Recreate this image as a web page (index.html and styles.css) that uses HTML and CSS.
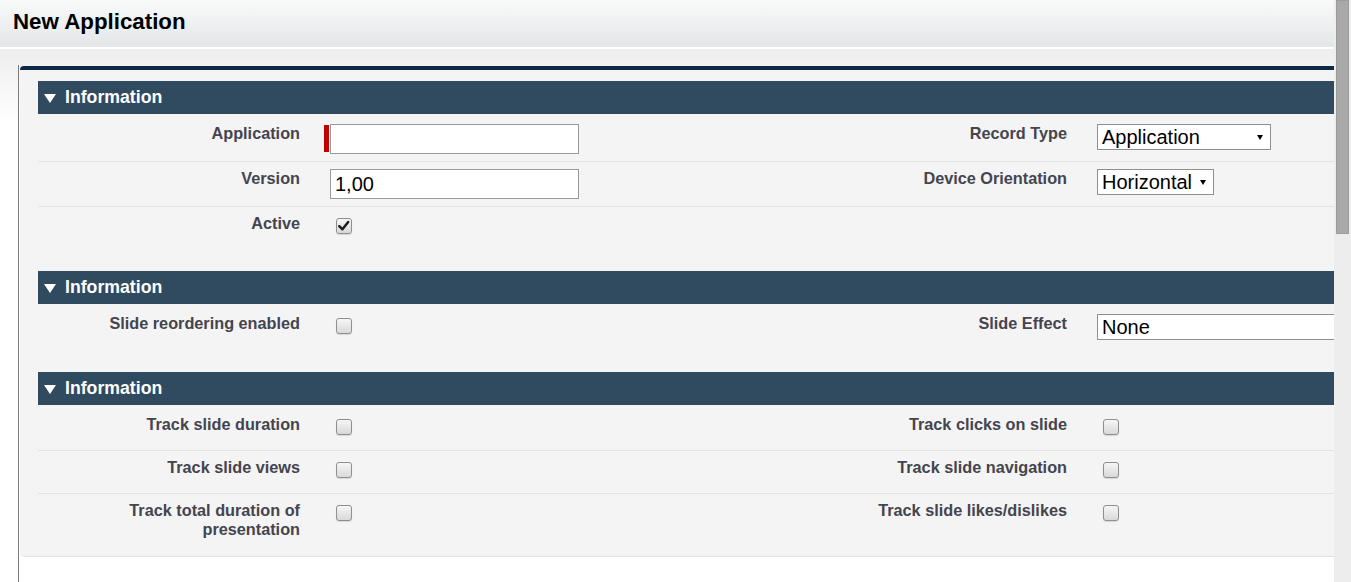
FILE: index.html
```html
<!DOCTYPE html>
<html>
<head>
<meta charset="utf-8">
<title>New Application</title>
<link rel="stylesheet" href="styles.css">
</head>
<body>
<div class="page">
  <div class="main">
    <div class="titlebar"><h1>New Application</h1></div>
    <div class="content">
      <div class="outer">
        <div class="panel">
          <div class="section">
            <div class="sec-head"><span class="tri"></span>Information</div>
            <div class="row first">
              <div class="lbl">Application</div>
              <div class="data"><span class="req"></span><input class="txt" type="text" value=""></div>
              <div class="lbl">Record Type</div>
              <div class="data rest"><span class="sel w174"><span>Application</span><span class="arrow"></span></span></div>
            </div>
            <div class="row">
              <div class="lbl">Version</div>
              <div class="data"><input class="txt" type="text" value="1,00"></div>
              <div class="lbl">Device Orientation</div>
              <div class="data rest"><span class="sel w117"><span>Horizontal</span><span class="arrow"></span></span></div>
            </div>
            <div class="row last">
              <div class="lbl">Active</div>
              <div class="data"><span class="cb checked"><svg viewBox="0 0 16 16" width="14" height="14"><path d="M2.6 8.2 L6.2 11.8 L12.8 3.4" fill="none" stroke="#1c1c1c" stroke-width="2.8" stroke-linecap="round" stroke-linejoin="round"/></svg></span></div>
              <div class="lbl"></div>
              <div class="data rest"></div>
            </div>
          </div>

          <div class="section mid">
            <div class="sec-head"><span class="tri"></span>Information</div>
            <div class="row first last">
              <div class="lbl">Slide reordering enabled</div>
              <div class="data"><span class="cb"></span></div>
              <div class="lbl">Slide Effect</div>
              <div class="data rest"><span class="sel wide"><span>None</span></span></div>
            </div>
          </div>

          <div class="section final">
            <div class="sec-head"><span class="tri"></span>Information</div>
            <div class="row first">
              <div class="lbl">Track slide duration</div>
              <div class="data"><span class="cb"></span></div>
              <div class="lbl">Track clicks on slide</div>
              <div class="data rest"><span class="cb"></span></div>
            </div>
            <div class="row">
              <div class="lbl">Track slide views</div>
              <div class="data"><span class="cb"></span></div>
              <div class="lbl">Track slide navigation</div>
              <div class="data rest"><span class="cb"></span></div>
            </div>
            <div class="row last">
              <div class="lbl">Track total duration of<br>presentation</div>
              <div class="data"><span class="cb"></span></div>
              <div class="lbl">Track slide likes/dislikes</div>
              <div class="data rest"><span class="cb"></span></div>
            </div>
          </div>
        </div>
      </div>
    </div>
  </div>
  <div class="scrollbar"><div class="thumb"></div></div>
</div>
</body>
</html>
```

FILE: styles.css
```css
html, body {
  margin: 0;
  padding: 0;
  height: 100%;
  overflow: hidden;
  background: #fff;
  font-family: "Liberation Sans", Arial, sans-serif;
}

.page {
  display: flex;
  height: 582px;
}

.main {
  flex: 1;
  min-width: 0;
  overflow: hidden;
  display: flex;
  flex-direction: column;
}

.scrollbar {
  width: 17px;
  flex: none;
  background: #ededed;
  padding: 0 2px;
  box-sizing: border-box;
}

.thumb {
  height: 234px;
  background: #a9a9a9;
  border: 1px solid #9b9b9b;
  box-sizing: border-box;
}

.titlebar {
  height: 47px;
  flex: none;
  background: linear-gradient(#f9fafa, #e3e6e7);
  border-bottom: 2px solid #ffffff;
}

.titlebar h1 {
  margin: 0;
  padding: 9px 0 0 13px;
  font-size: 22.3px;
  line-height: 26px;
  font-weight: bold;
  color: #000;
}

.content {
  flex: 1;
  background: linear-gradient(#eeeeee, #ffffff 75px);
  padding: 16px 0 0 18px;
  min-height: 0;
}

.outer {
  width: 1500px;
  height: 100%;
  box-sizing: border-box;
  border-left: 1px solid #7a7a7a;
  padding: 1px 0 0 1px;
}

.panel {
  background: #f4f4f4;
  border-top: 4px solid #0c2946;
  border-bottom: 1px solid #e0e0e0;
  border-radius: 4px 4px 0 5px;
  padding: 11px 0 10px 18px;
}

.section {
  margin-bottom: 22px;
}

.section.mid {
  margin-bottom: 23px;
}

.section.final {
  margin-bottom: 0;
}

.sec-head {
  height: 33px;
  box-sizing: border-box;
  background: #304b60;
  color: #fff;
  font-weight: bold;
  font-size: 17.7px;
  display: flex;
  align-items: center;
  padding: 0 0 0 6px;
}

.tri {
  width: 0;
  height: 0;
  border-left: 6px solid transparent;
  border-right: 6px solid transparent;
  border-top: 9px solid #ffffff;
  margin-right: 9px;
  margin-top: 1px;
}

.row {
  display: flex;
  padding: 7px 0;
  border-bottom: 1px solid #e3e3e3;
}

.row.first {
  padding-top: 10px;
}

.row.last {
  border-bottom: none;
}

.lbl {
  width: 262px;
  flex: none;
  text-align: right;
  font-weight: bold;
  font-size: 16.25px;
  line-height: 19px;
  color: #44444f;
  min-height: 28px;
}

.data {
  width: 505px;
  flex: none;
  box-sizing: border-box;
  padding-left: 30px;
  display: flex;
  align-items: flex-start;
}

.data.rest {
  width: auto;
  flex: 1;
}

.req {
  width: 5px;
  height: 27px;
  background: #c00000;
  margin: 1px 1px 0 -6px;
}

.txt {
  width: 249px;
  height: 30px;
  margin: 0;
  box-sizing: border-box;
  border: 1px solid #9a9a9a;
  border-radius: 0;
  padding: 0 4px;
  background: #fff;
  font-family: "Liberation Sans", Arial, sans-serif;
  font-size: 20px;
  color: #000;
  outline: none;
}

.sel {
  display: flex;
  align-items: center;
  justify-content: space-between;
  height: 26px;
  box-sizing: border-box;
  border: 1px solid #8f8f8f;
  background: #fff;
  padding: 0 7px 0 4px;
  font-size: 20px;
  color: #000;
  white-space: nowrap;
}

.sel.w174 { width: 174px; }
.sel.w117 { width: 117px; }
.sel.wide { width: 320px; }

.arrow {
  width: 0;
  height: 0;
  border-left: 3px solid transparent;
  border-right: 3px solid transparent;
  border-top: 5px solid #000;
  margin-top: 1px;
}

.cb {
  width: 16px;
  height: 16px;
  margin: 4px 0 0 6px;
  box-sizing: border-box;
  border: 1px solid #8e8e8e;
  border-radius: 3px;
  background: linear-gradient(#f6f6f6, #d9d9d9);
  box-shadow: 0 1px 1px rgba(0, 0, 0, 0.12);
  display: flex;
  align-items: center;
  justify-content: center;
}
```
